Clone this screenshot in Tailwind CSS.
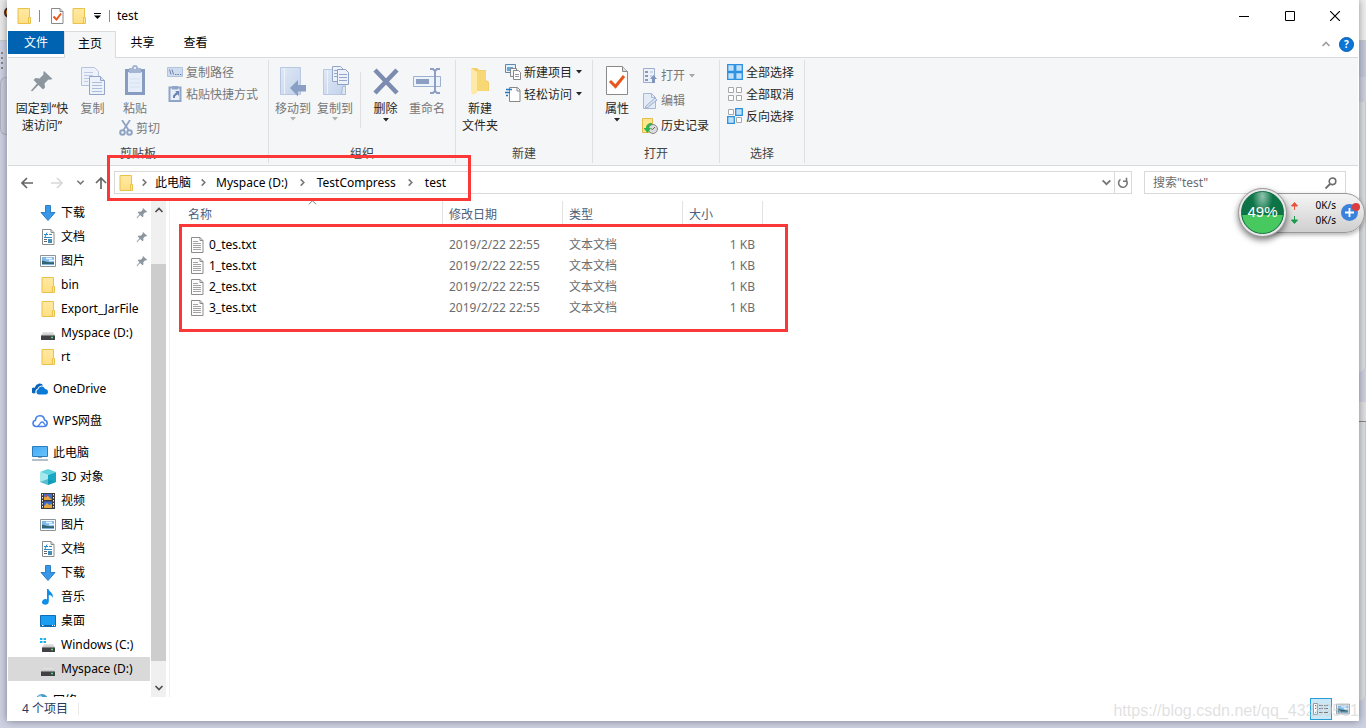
<!DOCTYPE html>
<html lang="zh-CN">
<head>
<meta charset="utf-8">
<title>test</title>
<script src="https://cdn.jsdelivr.net/npm/@tailwindcss/browser@4"></script>
</head>
<body class="relative flex h-screen overflow-hidden bg-[#cdd1e2] pb-[7px] font-['Noto_Sans','Noto_Sans_CJK_SC',sans-serif] text-xs text-black">

<!-- icon library -->
<svg class="absolute size-0" aria-hidden="true">
  <defs>
    <linearGradient id="gf" x1="0" y1="0" x2="0" y2="1"><stop offset="0" stop-color="#ffe9a2"/><stop offset="1" stop-color="#ffdf84"/></linearGradient>
    <linearGradient id="gb" x1="0" y1="0" x2="1" y2="1"><stop offset="0" stop-color="#dfe9f6"/><stop offset="1" stop-color="#c3d2ea"/></linearGradient>
    <linearGradient id="gm" x1="0" y1="0" x2="1" y2="1"><stop offset="0" stop-color="#3fa9f5"/><stop offset="1" stop-color="#6cc5fb"/></linearGradient>
    <linearGradient id="gd" x1="0" y1="0" x2="0" y2="1"><stop offset="0" stop-color="#e8e8e8"/><stop offset="1" stop-color="#bdbdbd"/></linearGradient>
    <symbol id="folder" viewBox="0 0 16 16"><path d="M2 .5h11.500v15H2z" fill="url(#gf)" stroke="#e9c14b"/><path d="M12.500 9.500h2v6h-2z" fill="#ffe9a2" stroke="#e9c14b"/></symbol>
    <symbol id="prop" viewBox="0 0 16 16"><path d="M2.500.5h8.500l3 3v12H2.500z" fill="#fff" stroke="#8a8a8a"/><path d="M11 .5v3h3" fill="#ddd" stroke="#8a8a8a"/><path d="M4.500 8.500l3 3 4.500-6" fill="none" stroke="#e8561d" stroke-width="2"/></symbol>
    <symbol id="pin" viewBox="0 0 24 24"><path d="M14 2l8.500 8-2.500.8-1.500-.3-4 4 .5 4-2 2-4.500-4.500L2 22.500 1 21.500l6-7L3.500 11l2-2 4 .5 4-4-.3-1.500z" fill="#8c969f"/></symbol>
    <symbol id="copy" viewBox="0 0 26 32"><path d="M1.500 2.500h13l4 4v14h-17z" fill="#edf2fa" stroke="#b5c3dc"/><path d="M4 7.500h9M4 10.500h9M4 13.500h5M4 16.500h4" stroke="#bccbe3"/><path d="M9.500 11.500h11l4 4v14h-15z" fill="#edf2fa" stroke="#93a6ca"/><path d="M20.500 11.500v4h4" fill="#d5dfef" stroke="#93a6ca"/><path d="M12 17.500h10M12 20.500h10M12 23.500h10M12 26.500h10" stroke="#aabddb"/></symbol>
    <symbol id="paste" viewBox="0 0 22 32"><path d="M1 4h20v26H1z" fill="#889cc2"/><path d="M4 7h14v20H4z" fill="#e6eef9"/><path d="M6 14h10M6 18h10M6 22h10" stroke="#d5e1f2"/><path d="M5 3h3a3 3 0 016 0h3v5H5z" fill="#a4b5d3"/><circle cx="11" cy="3" r="1" fill="#fff"/></symbol>
    <symbol id="cut" viewBox="0 0 14 16"><path d="M3 0l6.500 10M11 0L4.500 10" stroke="#8fa3c6" stroke-width="1.800"/><circle cx="3.500" cy="12.500" r="2.300" fill="none" stroke="#8fa3c6" stroke-width="2"/><circle cx="10.500" cy="12.500" r="2.300" fill="none" stroke="#8fa3c6" stroke-width="2"/></symbol>
    <symbol id="path" viewBox="0 0 16 16"><path d="M.5 3.500h15v9H.5z" fill="#cfdcee" stroke="#b4c4df"/><path d="M2.500 5.500l1.500 5M5 5.500l1.500 5" stroke="#6f84ab"/><path d="M8 10.500h1.500M10.500 10.500H12M13 10.500h1.500" stroke="#6f84ab"/></symbol>
    <symbol id="shortcut" viewBox="0 0 16 16"><path d="M2.500 1.500h11v13.500h-11z" fill="#e8effa" stroke="#90a4c8" stroke-width="2"/><path d="M5 0h6v3.500H5z" fill="#90a4c8"/><path d="M6 12V9.500L9.500 6 8 5h4v5l-1.500-1.800L8 10.500V12z" fill="#6d84b2"/></symbol>
    <symbol id="moveto" viewBox="-2 0 32 32"><path d="M1.500 2.500h20v27h-20z" fill="url(#gb)" stroke="#b9c9e3"/><path d="M5.500 3v26" stroke="#edf3fb"/><path d="M11 23l8-8v5h8v6.500h-8v5z" fill="#8a9fc4"/></symbol>
    <symbol id="copyto" viewBox="-2 0 32 32"><path d="M2.500 4.500h22v25h-22z" fill="url(#gb)" stroke="#b9c9e3"/><path d="M6.500 5v24" stroke="#edf3fb"/><path d="M21.500 21.500h3v8h-4z" fill="#dce6f4" stroke="#a9bbd8"/><path d="M11.500 1.500h8l3 3v12h-11z" fill="#edf2fa" stroke="#93a6ca"/><path d="M16.500 4.500h8l3 3v12h-11z" fill="#edf2fa" stroke="#8da1c6"/><path d="M18 9.500h8M18 12.500h8M18 15.500h8M13 5.500h3M13 8.500h3M13 11.500h3" stroke="#93a6ca"/></symbol>
    <symbol id="del" viewBox="0 0 32 32"><path d="M5 5l22 23M27 5L5 28" stroke="#7b8cb0" stroke-width="4.500"/></symbol>
    <symbol id="rename" viewBox="0 0 32 32"><path d="M2.500 11.500h27v10h-27z" fill="#edf3fb" stroke="#9db0d0"/><path d="M5 14h13v5H5z" fill="#8c9fc3"/><path d="M24 5v22M19 4h3l2 2 2-2h3M19 28h3l2-2 2 2h3" fill="none" stroke="#8c9fc3" stroke-width="2"/></symbol>
    <symbol id="bigfolder" viewBox="0 0 20 32"><path d="M1 3h6l2 2h7v10l3 2v9H5z" fill="#f4cf69"/><path d="M1 3l6 4v21l-4 2-2-3z" fill="#ffe9a8"/><path d="M7 6h9v10l2 2v8H7z" fill="#f8d775"/></symbol>
    <symbol id="newitem" viewBox="0 0 16 16"><path d="M.5.5h10v8H.5z" fill="#e5f0fa" stroke="#5d88ad"/><path d="M2 3h6v4H2z" fill="#60a9dc"/><path d="M5.500 4.500h6v8h-6z" fill="#f5f5f5" stroke="#888"/><path d="M8.500 6.500h5l2 2v7h-7z" fill="#fff" stroke="#888"/><path d="M10 10.500h4M10 12.500h4" stroke="#999"/></symbol>
    <symbol id="easy" viewBox="0 0 16 16"><path d="M4.500 1.500h8l2.500 2.500v11.500H4.500z" fill="#fff" stroke="#888"/><path d="M12 1.500V5h3" fill="none" stroke="#888"/><path d="M1 3.500h6M0 6.500h5M1 9.500h2" stroke="#2878be" stroke-width="1.300"/></symbol>
    <symbol id="bigprop" viewBox="0 0 24 32"><path d="M1.500 1.500h16l5 5v23h-21z" fill="#fff" stroke="#8a8a8a"/><path d="M17.500 1.500v5h5" fill="#ddd" stroke="#8a8a8a"/><path d="M5 16l5.500 5.500L19 11" fill="none" stroke="#e8561d" stroke-width="3"/></symbol>
    <symbol id="open" viewBox="0 0 16 16"><path d="M1.500.5h11v14h-11z" fill="#edf2fa" stroke="#9dafce"/><path d="M3 3h3v2H3zM3 7h3v2H3zM3 11h3v2H3z" fill="#849ac0"/><path d="M8 4h3M8 8h2" stroke="#a9bad6"/><path d="M8 11l3.500-4 3.500 4h-2v4h-3v-4z" fill="#7f95bc"/></symbol>
    <symbol id="edit" viewBox="0 0 16 16"><path d="M1.500.5h8l4 4v11h-12z" fill="#e3ebf7" stroke="#a7b8d4"/><path d="M9.500.5v4h4" fill="none" stroke="#a7b8d4"/><path d="M3 14L13 5l2 2L5 15z" fill="#d5e0f0" stroke="#9db0d0"/></symbol>
    <symbol id="history" viewBox="0 0 16 16"><path d="M.5.500h10v14H.5z" fill="#ffe68e" stroke="#e2bd4d"/><circle cx="11" cy="11" r="4.500" fill="#dcdcdc" stroke="#888"/><path d="M13 9l-2.500 2.500L9 10.500" fill="none" stroke="#666"/><path d="M10 5C6 5 4 7 4 10H1.500l4 5L9 10H7c0-2 1-3 3-3z" fill="#2fb34a"/></symbol>
    <symbol id="selall" viewBox="0 0 16 16"><path d="M.7.7h6.600v6.600H.7zM8.700.7h6.600v6.600H8.700zM.7 8.700h6.600v6.600H.7zM8.700 8.700h6.600v6.600H8.700z" fill="#bfe0f9" stroke="#2b8fdf" stroke-width="1.300"/></symbol>
    <symbol id="selnone" viewBox="0 0 16 16"><path d="M1.500 1.500h5v5h-5zM9.500 1.500h5v5h-5zM1.500 9.500h5v5h-5zM9.500 9.500h5v5h-5z" fill="#fff" stroke="#a8a8a8"/></symbol>
    <symbol id="selinv" viewBox="0 0 16 16"><path d="M1.500 1.500h5v5h-5zM9.500 9.500h5v5h-5z" fill="#fff" stroke="#a8a8a8"/><path d="M8.700.7h6.600v6.600H8.700zM.7 8.700h6.600v6.600H.7z" fill="#bfe0f9" stroke="#2b8fdf" stroke-width="1.300"/></symbol>
    <symbol id="down" viewBox="0 0 16 16"><path d="M5.500.5h5v7h4.500L8 15.500 1 7.500h4.500z" fill="#3a97e8" stroke="#2a7fcb"/></symbol>
    <symbol id="doc" viewBox="0 0 16 16"><path d="M2.500.5h8.500l3 3v12H2.500z" fill="#fff" stroke="#8b8b8b"/><path d="M11 .5v3h3" fill="#ddd" stroke="#8b8b8b"/><path d="M4 5.500h4M7 3.500L5 8M9 5.500h3M4 8.500h8" stroke="#2a8bcb"/><path d="M4 10.500h3M4 12.500h3" stroke="#666"/><path d="M8 10h4v4H8z" fill="#3f8fb9"/></symbol>
    <symbol id="pic" viewBox="0 0 16 16"><path d="M.5 2.500h15v11H.5z" fill="#fff" stroke="#8d9499"/><path d="M2 4h12v8H2z" fill="#7fb9ea"/><path d="M2 7.500c3 .5 5 2.500 12 1.500v3H2z" fill="#2f6470"/><path d="M6 5.500h6M9 7.500h5" stroke="#eef6fd" stroke-width="1.500"/><path d="M2 11.500h12" stroke="#7fb3dd"/></symbol>
    <symbol id="drive" viewBox="0 0 16 16"><path d="M3 7h10l2 4H1z" fill="url(#gd)"/><path d="M1 10.500h14V15H1z" fill="#3f4144"/><path d="M11 12.500h2" stroke="#4fe07b" stroke-width="1.500"/></symbol>
    <symbol id="cdrive" viewBox="0 0 16 16"><path d="M4 7h9l2 4H2z" fill="url(#gd)"/><path d="M2 10.500h13V15H2z" fill="#3f4144"/><path d="M11 12.500h2" stroke="#4fe07b" stroke-width="1.500"/><path d="M0 1h2.500v2H0zM3.500 1H6v2H3.500zM0 4h2.500v2H0zM3.500 4H6v2H3.500z" fill="#1ab4ea"/></symbol>
    <symbol id="onedrive" viewBox="0 0 16 16"><path d="M3.500 12.500A3.300 3.300 0 013 6.300 4.600 4.600 0 0111.300 4.500c-3-.5-5 1-5.600 2.900-2 .6-2.900 2.800-2.200 5.100z" fill="#0a64b9"/><path d="M2.500 12.500a3 3 0 01-.5-6" fill="#0a64b9"/><path d="M6.500 13.500a2.700 2.700 0 01-.2-5.200c.8-3.700 5.700-3.900 6.700-.2 3.800 0 4 5.400.6 5.400z" fill="#0a7ad6"/></symbol>
    <symbol id="wps" viewBox="0 0 16 16"><path d="M4 13.500a3.200 3.200 0 01-.5-6.300C3.700 1.500 11.800 1 12.500 7c3.800.8 3.400 6.500-.5 6.500z" fill="#fff" stroke="#4a82ea" stroke-width="1.600"/><path d="M5.500 13c3-.5 2-4 4.500-4s2 3 4 3.500" fill="none" stroke="#4a82ea" stroke-width="1.300"/></symbol>
    <symbol id="pc" viewBox="0 0 16 16"><path d="M.5 1.500h15v10H.5z" fill="url(#gm)" stroke="#2b7cb8"/><path d="M6 12.500h4" stroke="#9aa8b3"/><path d="M0 15h16" stroke="#7f97ab" stroke-width="1.200"/></symbol>
    <symbol id="cube" viewBox="0 0 16 16"><path d="M0 3l8-3 8 3-8 3z" fill="#5fd3df"/><path d="M0 3l8 3v10l-8-3z" fill="#a6e8ee"/><path d="M8 6l8-3v10l-8 3z" fill="#17a9c4"/><path d="M0 13l8-3 8 3-8 3z" fill="#0b8fae" opacity=".5"/></symbol>
    <symbol id="film" viewBox="0 0 16 16"><path d="M1 0h14v16H1z" fill="#3b3b3b"/><path d="M2.500 1v15M13.500 1v15" stroke="#eee" stroke-dasharray="1.500 1.500"/><path d="M4 1h8v6H4zM4 8.500h8V15H4z" fill="#3b6fd0"/><path d="M4 4l4-1 4 4H4zM4 13l3-3 2 2 3-1v4H4z" fill="#e6a63b"/><circle cx="6" cy="3" r="1.200" fill="#d14b3b"/></symbol>
    <symbol id="music" viewBox="0 0 16 16"><path d="M7 0h1.500c.5 3 5.500 3.500 4 9C12 7 11 6.300 8.800 6v6.500c0 4.500-7.300 4-6.800.5C2.300 10.500 5 9.500 7 10.500z" fill="#0f8ee9"/></symbol>
    <symbol id="desk" viewBox="0 0 16 16"><path d="M.5 2.500h15v11H.5z" fill="#1b9df2" stroke="#0c6cb8"/><path d="M1 12.500h14" stroke="#0b65ad"/><path d="M2 12.500h1.500M12 12.500h1M14 12.500h1" stroke="#fff"/></symbol>
    <symbol id="net" viewBox="0 0 16 16"><circle cx="10" cy="7" r="6" fill="#4798c8"/><path d="M6 4c2-3 5-1 4 1S7 7 6 4z" fill="#bfe4ef"/></symbol>
    <symbol id="txt" viewBox="0 0 14 16"><path d="M1.500.5h8.500l3 3v12H1.500z" fill="#fdfdfd" stroke="#8c8c8c"/><path d="M10 .5v3h3" fill="none" stroke="#8c8c8c"/><path d="M3 4.500h5M3 6.500h8M3 8.500h8M3 10.500h8M3 12.500h8" stroke="#a3a3a3"/></symbol>
    <symbol id="arr" viewBox="0 0 12 12"><path d="M12 6H1M6 1L1 6l5 5" fill="none" stroke="currentColor" stroke-width="1.700"/></symbol>
    <symbol id="chev" viewBox="0 0 10 10"><path d="M1.500 3L5 6.500 8.500 3" fill="none" stroke="currentColor" stroke-width="1.700"/></symbol>
    <symbol id="tri" viewBox="0 0 6 4"><path d="M0 0h6L3 3.500z" fill="currentColor"/></symbol>
  </defs>
</svg>

<!-- desktop strip on the left -->
<div class="w-[7px] shrink-0 overflow-hidden">
  <div class="h-[41px] border-b border-[#c8c8c8] bg-[#eaeaea] pt-[7px]"><div class="ml-[4px] size-[11px] rounded-full border-2 border-[#4d2a1c] bg-[#ef8b2c]"></div></div>
  <div class="flex h-9 flex-col gap-[3px] pt-[11px] pl-px"><i class="size-[2px] shrink-0 bg-[#8b8580]"></i><i class="size-[2px] shrink-0 bg-[#8b8580]"></i><i class="size-[2px] shrink-0 bg-[#8b8580]"></i><i class="size-[2px] shrink-0 bg-[#8b8580]"></i></div>
  <div class="h-[58px] rounded-l-md border border-r-0 border-[#aeb2c0] bg-[#c9cddb]"></div>
</div>

<!-- explorer window -->
<div class="relative z-10 flex min-w-0 flex-1 flex-col bg-white px-px shadow-[0_0_8px_rgba(0,0,0,0.4)]">
  <header class="flex h-[31px] shrink-0 items-center">
    <svg class="ml-2 size-4"><use href="#folder"/></svg>
    <i class="ml-[7px] h-3 w-px bg-[#8c8c8c]"></i>
    <button class="ml-[9px]" aria-label="属性"><svg class="size-4"><use href="#prop"/></svg></button>
    <button class="ml-[6px]" aria-label="新建文件夹"><svg class="size-4"><use href="#folder"/></svg></button>
    <button class="ml-[7px]" aria-label="自定义快速访问工具栏"><svg class="h-[6px] w-[7px]" viewBox="0 0 7 6"><path d="M0 .5h7" stroke="#000"/><path d="M0 2.500h7L3.500 6z"/></svg></button>
    <i class="ml-2 h-3 w-px bg-[#8c8c8c]"></i>
    <h1 class="ml-[7px]">test</h1>
    <div class="ml-auto flex">
      <button class="grid h-[30px] w-[46px] place-items-center" aria-label="最小化"><svg class="size-[10px]"><path d="M0 5.500h10" stroke="#000"/></svg></button>
      <button class="grid h-[30px] w-[45px] place-items-center" aria-label="最大化"><svg class="size-[10px]"><path d="M.5.5h9v9h-9z" fill="none" stroke="#000"/></svg></button>
      <button class="grid h-[30px] w-[46px] place-items-center" aria-label="关闭"><svg class="size-[10px]"><path d="M0 0l10 10M10 0L0 10" stroke="#000" stroke-width="1.200"/></svg></button>
    </div>
  </header>

  <nav class="flex h-[27px] shrink-0 items-start border-b border-[#dadbdc]">
    <button class="h-[23px] w-14 bg-[#0063b1] pt-px text-white">文件</button>
    <button class="h-[27px] w-[52px] border border-b-0 border-[#dadbdc] bg-[#f5f6f7] pb-[3px]">主页</button>
    <button class="h-[23px] w-[53px] pt-px">共享</button>
    <button class="h-[23px] w-[53px] pt-px">查看</button>
    <div class="ml-auto flex h-[26px] items-center gap-2 pr-1">
      <button aria-label="折叠功能区"><svg class="size-[10px] rotate-180 text-[#a0a0a0]"><use href="#chev"/></svg></button>
      <button class="grid size-[15px] place-items-center rounded-full border border-[#0b5cab] bg-[#0a76d8] text-[10px] font-bold text-white" aria-label="帮助">?</button>
    </div>
  </nav>

  <section class="flex h-[108px] shrink-0 border-b border-[#dadbdc] bg-[#f5f6f7] py-[2px] leading-[17px] text-[#262626]">
    <div class="flex w-[261px] flex-col border-r border-[#dfe0e2]">
      <div class="flex flex-1 items-start pl-[6px] text-[#777]">
        <button class="flex w-14 flex-col items-center gap-[3px] pt-[5px] text-[#262626]"><span class="grid size-8 place-items-center"><svg class="size-6"><use href="#pin"/></svg></span><span>固定到“快<br>速访问”</span></button>
        <button class="flex w-[45px] flex-col items-center gap-[3px] pt-[5px]"><svg class="h-8 w-[26px]"><use href="#copy"/></svg>复制</button>
        <div class="flex w-[52px] flex-col items-start pl-1">
          <button class="flex w-8 flex-col items-center gap-[3px] pt-[5px]"><svg class="h-8 w-[22px]"><use href="#paste"/></svg>粘贴</button>
          <button class="flex h-[22px] items-center gap-[3px] whitespace-nowrap"><svg class="h-4 w-[14px]"><use href="#cut"/></svg>剪切</button>
        </div>
        <div class="flex flex-col pt-px">
          <button class="flex h-[22px] items-center gap-[3px]"><svg class="size-4"><use href="#path"/></svg>复制路径</button>
          <button class="flex h-[22px] items-center gap-[3px]"><svg class="size-4"><use href="#shortcut"/></svg>粘贴快捷方式</button>
        </div>
      </div>
      <h2 class="pb-px text-center text-[#444]">剪贴板</h2>
    </div>

    <div class="flex w-[187px] flex-col border-r border-[#dfe0e2]">
      <div class="flex flex-1 items-start pl-[3px] text-[#777]">
        <button class="flex w-[42px] flex-col items-center gap-[3px] pt-[5px] whitespace-nowrap"><svg class="size-8"><use href="#moveto"/></svg>移动到<svg class="-mt-[3px] h-1 w-[6px] text-[#b0b4b0]"><use href="#tri"/></svg></button>
        <button class="flex w-[42px] flex-col items-center gap-[3px] pt-[5px] whitespace-nowrap"><svg class="size-8"><use href="#copyto"/></svg>复制到<svg class="-mt-[3px] h-1 w-[6px] text-[#b0b4b0]"><use href="#tri"/></svg></button>
        <i class="mx-1 mt-3 h-14 w-px bg-[#dfe0e2]"></i>
        <button class="flex w-[41px] flex-col items-center gap-[3px] pt-[5px] text-[#262626]"><svg class="size-8"><use href="#del"/></svg>删除<svg class="-mt-[2px] h-1 w-[6px]"><use href="#tri"/></svg></button>
        <button class="flex w-[42px] flex-col items-center gap-[3px] pt-[5px] whitespace-nowrap"><svg class="size-8"><use href="#rename"/></svg>重命名</button>
      </div>
      <h2 class="pb-px text-center text-[#444]">组织</h2>
    </div>

    <div class="flex w-[137px] flex-col border-r border-[#dfe0e2]">
      <div class="flex flex-1 items-start">
        <button class="flex w-12 flex-col items-center gap-[3px] pt-[5px]"><svg class="h-8 w-5"><use href="#bigfolder"/></svg><span>新建<br>文件夹</span></button>
        <div class="flex flex-col pt-px pl-px">
          <button class="flex h-[22px] items-center gap-[3px]"><svg class="size-4"><use href="#newitem"/></svg>新建项目<svg class="ml-px h-1 w-[6px]"><use href="#tri"/></svg></button>
          <button class="flex h-[22px] items-center gap-[3px]"><svg class="size-4"><use href="#easy"/></svg>轻松访问<svg class="ml-px h-1 w-[6px]"><use href="#tri"/></svg></button>
        </div>
      </div>
      <h2 class="pb-px text-center text-[#444]">新建</h2>
    </div>

    <div class="flex w-[127px] flex-col border-r border-[#dfe0e2]">
      <div class="flex flex-1 items-start">
        <button class="flex w-12 flex-col items-center gap-[3px] pt-[5px]"><svg class="h-8 w-6"><use href="#bigprop"/></svg>属性<svg class="-mt-[2px] h-1 w-[6px]"><use href="#tri"/></svg></button>
        <div class="flex flex-col pt-[3px] pl-px">
          <button class="flex h-[25px] items-center gap-[3px] text-[#777]"><svg class="size-4"><use href="#open"/></svg>打开<svg class="ml-px h-1 w-[6px] text-[#a5a9a5]"><use href="#tri"/></svg></button>
          <button class="flex h-[25px] items-center gap-[3px] text-[#777]"><svg class="size-4"><use href="#edit"/></svg>编辑</button>
          <button class="flex h-[25px] items-center gap-[3px]"><svg class="size-4"><use href="#history"/></svg>历史记录</button>
        </div>
      </div>
      <h2 class="pb-px text-center text-[#444]">打开</h2>
    </div>

    <div class="flex w-[85px] flex-col border-r border-[#dfe0e2]">
      <div class="flex flex-1 flex-col items-start pt-px pl-[7px]">
        <button class="flex h-[22px] items-center gap-[3px]"><svg class="size-4"><use href="#selall"/></svg>全部选择</button>
        <button class="flex h-[22px] items-center gap-[3px]"><svg class="size-4"><use href="#selnone"/></svg>全部取消</button>
        <button class="flex h-[22px] items-center gap-[3px]"><svg class="size-4"><use href="#selinv"/></svg>反向选择</button>
      </div>
      <h2 class="pb-px text-center text-[#444]">选择</h2>
    </div>
  </section>

  <div class="flex h-[35px] shrink-0 items-center px-3 pb-[2px]">
    <button class="ml-px" aria-label="后退"><svg class="size-3 text-[#666]"><use href="#arr"/></svg></button>
    <button class="ml-[18px]" aria-label="前进"><svg class="size-3 rotate-180 text-[#d8d8d8]"><use href="#arr"/></svg></button>
    <button class="ml-[13px]" aria-label="最近位置"><svg class="size-[9px] text-[#777]"><use href="#chev"/></svg></button>
    <button class="ml-[10px]" aria-label="上移"><svg class="size-3 rotate-90 text-[#666]"><use href="#arr"/></svg></button>
    <div class="ml-[7px] flex h-[23px] flex-1 items-center border border-[#d9d9d9] pl-[3px]">
      <svg class="size-4"><use href="#folder"/></svg>
      <svg class="mx-[6px] size-[9px] -rotate-90 text-[#777]"><use href="#chev"/></svg>
      <a href="#">此电脑</a>
      <svg class="mx-2 size-[9px] -rotate-90 text-[#777]"><use href="#chev"/></svg>
      <a href="#">Myspace (D:)</a>
      <svg class="mx-[10px] size-[9px] -rotate-90 text-[#777]"><use href="#chev"/></svg>
      <a href="#">TestCompress</a>
      <svg class="mx-[10px] size-[9px] -rotate-90 text-[#777]"><use href="#chev"/></svg>
      <a href="#">test</a>
      <button class="mr-[2px] ml-auto" aria-label="历史路径"><svg class="size-[11px] text-[#777]"><use href="#chev"/></svg></button>
      <button class="grid h-full w-[17px] place-items-center border-l border-[#d9d9d9]" aria-label="刷新"><svg class="size-3" viewBox="0 0 12 12"><path d="M3.500 2.400A4.300 4.300 0 109 3M9.500 .8v3.400H6" fill="none" stroke="#777" stroke-width="1.600"/></svg></button>
    </div>
    <label class="ml-3 flex h-[23px] w-[202px] items-center border border-[#d9d9d9] px-2">
      <input class="min-w-0 flex-1 outline-none placeholder:text-[#6d6d6d]" type="text" placeholder='搜索"test"' aria-label="搜索">
      <svg class="size-3" viewBox="0 0 12 12"><circle cx="7.500" cy="4.300" r="3.300" fill="none" stroke="#6b6b6b" stroke-width="1.600"/><path d="M5 7L.5 11.500" stroke="#6b6b6b" stroke-width="1.800"/></svg>
    </label>
  </div>

  <div class="flex min-h-0 flex-1">
    <aside class="w-[142px] shrink-0 overflow-hidden whitespace-nowrap">
      <ul class="[&_a]:flex [&_a]:h-6 [&_a]:items-center [&_a]:gap-[5px] [&_a]:pl-8">
        <li><a href="#"><svg class="size-4"><use href="#down"/></svg>下载<svg class="mr-[2px] ml-auto size-3"><use href="#pin"/></svg></a></li>
        <li><a href="#"><svg class="size-4"><use href="#doc"/></svg>文档<svg class="mr-[2px] ml-auto size-3"><use href="#pin"/></svg></a></li>
        <li><a href="#"><svg class="size-4"><use href="#pic"/></svg>图片<svg class="mr-[2px] ml-auto size-3"><use href="#pin"/></svg></a></li>
        <li><a href="#"><svg class="size-4"><use href="#folder"/></svg>bin</a></li>
        <li><a href="#"><svg class="size-4"><use href="#folder"/></svg>Export_JarFile</a></li>
        <li><a href="#"><svg class="size-4"><use href="#drive"/></svg>Myspace (D:)</a></li>
        <li><a href="#"><svg class="size-4"><use href="#folder"/></svg>rt</a></li>
      </ul>
      <a href="#" class="mt-2 flex h-6 items-center gap-[5px] pl-6"><svg class="size-4"><use href="#onedrive"/></svg>OneDrive</a>
      <a href="#" class="mt-2 flex h-6 items-center gap-[5px] pl-6"><svg class="size-4"><use href="#wps"/></svg>WPS网盘</a>
      <a href="#" class="mt-2 flex h-6 items-center gap-[5px] pl-6"><svg class="size-4"><use href="#pc"/></svg>此电脑</a>
      <ul class="[&_a]:flex [&_a]:h-6 [&_a]:items-center [&_a]:gap-[5px] [&_a]:pl-8">
        <li><a href="#"><svg class="size-4"><use href="#cube"/></svg>3D 对象</a></li>
        <li><a href="#"><svg class="size-4"><use href="#film"/></svg>视频</a></li>
        <li><a href="#"><svg class="size-4"><use href="#pic"/></svg>图片</a></li>
        <li><a href="#"><svg class="size-4"><use href="#doc"/></svg>文档</a></li>
        <li><a href="#"><svg class="size-4"><use href="#down"/></svg>下载</a></li>
        <li><a href="#"><svg class="size-4"><use href="#music"/></svg>音乐</a></li>
        <li><a href="#"><svg class="size-4"><use href="#desk"/></svg>桌面</a></li>
        <li><a href="#"><svg class="size-4"><use href="#cdrive"/></svg>Windows (C:)</a></li>
        <li><a href="#" class="bg-[#d9d9d9]"><svg class="size-4"><use href="#drive"/></svg>Myspace (D:)</a></li>
      </ul>
      <a href="#" class="mt-2 flex h-6 items-center gap-[5px] pl-6"><svg class="size-4"><use href="#net"/></svg>网络</a>
    </aside>
    <div class="ml-px flex w-[15px] shrink-0 flex-col items-center bg-[#f0f0f0]">
      <svg class="my-1 size-[10px] shrink-0 rotate-180 text-[#505050]"><use href="#chev"/></svg>
      <i class="mt-[45px] w-full flex-1 bg-[#cdcdcd]"></i>
      <svg class="mt-[22px] mb-1 size-[10px] shrink-0 text-[#505050]"><use href="#chev"/></svg>
    </div>
    <main class="ml-[3px] min-w-0 flex-1 border-l border-[#f0f0f0]">
      <table class="w-[593px] table-fixed border-collapse text-left text-[#6d6d6d]">
        <colgroup><col class="w-[273px]"><col class="w-[120px]"><col class="w-[120px]"><col class="w-20"></colgroup>
        <thead class="align-top text-[#4c607a] [&_div]:h-[25px] [&_div]:border-r [&_div]:border-[#e2e2e2] [&_div]:pt-[6px] [&_div]:leading-4 [&_th]:h-[33px] [&_th]:p-0 [&_th]:font-normal">
          <tr>
            <th><div class="relative pl-[18px]">名称<svg class="absolute -top-[3px] left-[138px] size-[9px] rotate-180 text-[#777]" viewBox="0 0 10 10"><path d="M1 3l4 4 4-4" fill="none" stroke="currentColor"/></svg></div></th>
            <th><div class="pl-[6px]">修改日期</div></th>
            <th><div class="pl-[6px]">类型</div></th>
            <th><div class="pl-[6px]">大小</div></th>
          </tr>
        </thead>
        <tbody class="[&_td]:h-[21px] [&_td]:py-0 [&_td]:pr-0 [&_td]:pl-[6px] [&_td]:leading-4">
          <tr><td><span class="flex items-center gap-[5px] pl-[14px] text-black"><svg class="h-4 w-[14px]"><use href="#txt"/></svg>0_tes.txt</span></td><td>2019/2/22 22:55</td><td>文本文档</td><td><span class="block pr-2 text-right">1 KB</span></td></tr>
          <tr><td><span class="flex items-center gap-[5px] pl-[14px] text-black"><svg class="h-4 w-[14px]"><use href="#txt"/></svg>1_tes.txt</span></td><td>2019/2/22 22:55</td><td>文本文档</td><td><span class="block pr-2 text-right">1 KB</span></td></tr>
          <tr><td><span class="flex items-center gap-[5px] pl-[14px] text-black"><svg class="h-4 w-[14px]"><use href="#txt"/></svg>2_tes.txt</span></td><td>2019/2/22 22:55</td><td>文本文档</td><td><span class="block pr-2 text-right">1 KB</span></td></tr>
          <tr><td><span class="flex items-center gap-[5px] pl-[14px] text-black"><svg class="h-4 w-[14px]"><use href="#txt"/></svg>3_tes.txt</span></td><td>2019/2/22 22:55</td><td>文本文档</td><td><span class="block pr-2 text-right">1 KB</span></td></tr>
        </tbody>
      </table>
    </main>
  </div>

  <footer class="flex h-6 shrink-0 items-center pl-[14px] text-[#26395c]">
    <span>4 个项目</span><i class="ml-[10px] h-3 w-px bg-[#e8e8e8]"></i>
    <button class="ml-auto grid size-[22px] place-items-center border border-[#26a0da] bg-[#cce8f6]" aria-label="详细信息"><svg class="h-3 w-4" viewBox="0 0 16 12"><path d="M.5.5h4v11h-4z" fill="#fff" stroke="#999"/><path d="M2 2.500h1M2 5.500h1" stroke="#36c"/><path d="M2 9.500h1" stroke="#d33"/><path d="M6 2.500h4M6 5.500h4M6 9.500h4M11 2.500h4M11 5.500h4M11 9.500h4" stroke="#777"/></svg></button>
    <button class="mr-2 ml-1" aria-label="大缩略图"><svg class="size-[14px]"><use href="#pic"/></svg></button>
  </footer>
</div>

<!-- desktop strip on the right -->
<div class="flex w-[7px] shrink-0 flex-col">
  <div class="h-[41px] border-b border-[#c8c8c8] bg-[#efefef]"></div>
  <div class="h-9 bg-[#c4c9dc]"></div>
  <div class="h-[25px] rounded-tr-md bg-[#ced1df]"></div>
  <div class="h-[270px] rounded-br-md border-r border-[#c5c9d6] bg-[#dedfe3]"></div>
  <div class="mt-1 h-[26px] rounded-tr-md bg-[#ced1df]"></div>
  <div class="h-5 border-b border-[#888] bg-[#e0e0e2]"></div>
  <div class="h-[279px] rounded-br-md border-r border-[#c5c9d6] bg-[#dedfe0]"></div>
</div>

<!-- callout frames -->
<div class="pointer-events-none absolute top-[155px] left-[107px] z-20 h-[46px] w-[364px] border-3 border-[#fb3838]"></div>
<div class="pointer-events-none absolute top-[224px] left-[179px] z-20 h-[108px] w-[609px] border-3 border-[#fb3838]"></div>

<!-- floating network monitor -->
<div class="absolute top-[188px] right-[1px] z-30 flex h-[49px] w-[127px] items-center font-['Liberation_Sans','Noto_Sans_CJK_SC',sans-serif]">
  <div class="z-10 grid size-[49px] shrink-0 place-items-center rounded-full border border-[#999] bg-[#e8e8e8] shadow-[0_3px_6px_rgba(0,0,0,0.5)]">
    <div class="grid size-[43px] place-items-center rounded-full border border-[#0a6b42] bg-[radial-gradient(ellipse_at_50%_10%,#8fc4ac_0,#0d7549_35%,#0b7045_100%)]">
      <div class="grid size-[41px] place-items-center rounded-full bg-linear-to-b from-transparent from-55% to-[#48c95f] to-55% pb-[2px] text-[15px] text-white">49%</div>
    </div>
  </div>
  <div class="-ml-6 flex h-10 flex-1 items-center rounded-r-full border border-[#999] bg-linear-to-b from-[#f5f5f5] to-[#cfcfcf] pl-[27px] shadow-[0_2px_4px_rgba(0,0,0,0.3)]">
    <svg class="h-6 w-[7px]" viewBox="0 0 7 24"><path d="M3.500 9V3M.5 5l3-3.500 3 3.500z" fill="#e8533c" stroke="#e8533c"/><path d="M3.500 15v6M.5 19l3 3.500 3-3.500z" fill="#1d9a4c" stroke="#1d9a4c"/></svg>
    <div class="ml-auto flex flex-col font-['Noto_Sans',sans-serif] text-[10px] leading-[15px]"><span>0K/s</span><span>0K/s</span></div>
    <button class="relative mr-[6px] ml-[5px] grid size-[17px] place-items-center rounded-full bg-[#3b82dc]" aria-label="加速"><svg class="size-[9px]" viewBox="0 0 9 9"><path d="M4.500 0v9M0 4.500h9" stroke="#fff" stroke-width="1.800"/></svg><i class="absolute -top-px -right-[2px] size-2 rounded-full bg-[#dc3c3c]"></i></button>
  </div>
</div>

<p class="pointer-events-none absolute right-[7px] bottom-[7px] z-30 font-['Liberation_Sans',sans-serif] text-base leading-5 text-[#ccc]/60">https://blog.csdn.net/qq_43289531</p>
</body>
</html>
